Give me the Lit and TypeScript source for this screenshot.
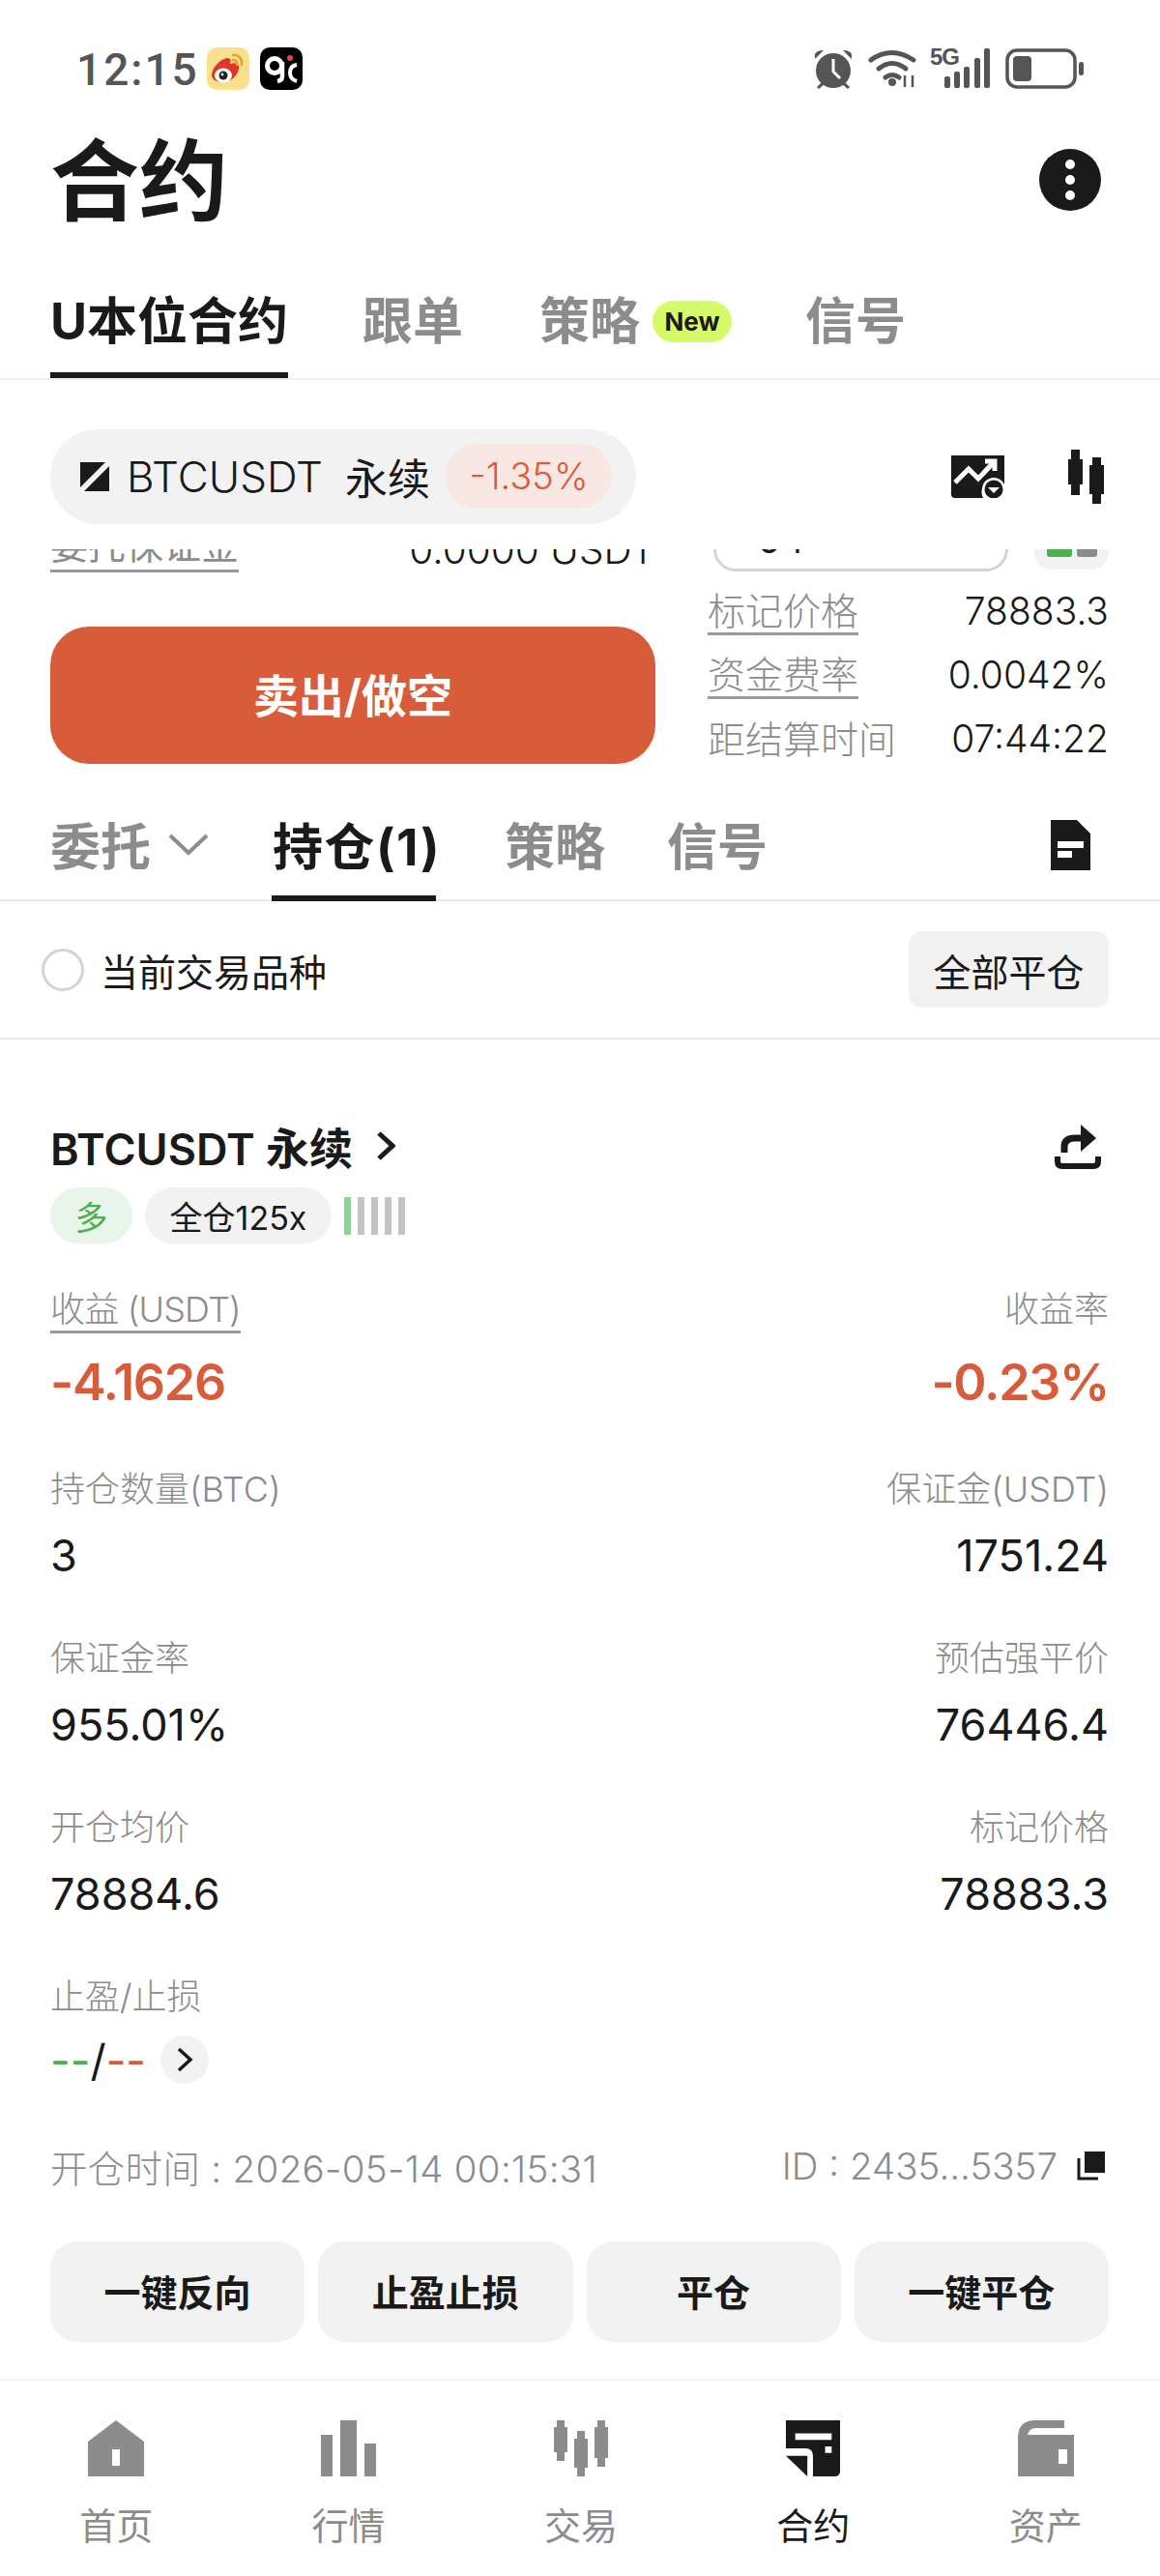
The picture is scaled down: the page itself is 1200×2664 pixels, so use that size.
import { LitElement, html, css, svg } from "lit";
import { customElement } from "lit/decorators.js";

const navIcons = [
  svg`<svg class="nav-ic" viewBox="0 0 58 58"><path fill="#8c8c8c" fill-rule="evenodd" d="M0 22 29 0l29 22v36H0zM25 30v17h8V30z"/></svg>`,
  svg`<svg class="nav-ic" viewBox="0 0 58 58"><path fill="#8c8c8c" d="M0 15h12v43H0zM20 0h17v58H20zM45 24h12v34H45z"/></svg>`,
  svg`<svg class="nav-ic" viewBox="0 0 58 58"><g fill="#8c8c8c"><path d="M4 0h8v7h3v26h-3v9H4v-9H1V7h3z"/><path d="M25 11h8v8h3v30h-3v9h-8v-9h-3V19h3z"/><path d="M46 0h8v7h3v32h-3v9h-8v-9h-3V7h3z"/></g></svg>`,
  svg`<svg class="nav-ic" viewBox="0 0 58 60"><path fill="#1a1a1a" fill-rule="evenodd" d="M0 0h58v54q0 6-6 6H29V38q0-8-8-8H0zM10 14v7h39v-7zM42 28v7h7v-7z"/><path fill="#1a1a1a" d="M0 38h23v22z"/></svg>`,
  svg`<svg class="nav-ic" viewBox="0 0 58 58"><path fill="#8c8c8c" fill-rule="evenodd" d="M0 58V18Q0 0 18 0h30v8H18q-6 0-8 7h48v43zM42 30v15h9V30z"/></svg>`,
];
const navLabels = ["首页", "行情", "交易", "合约", "资产"];

type M = { l: string; v: string; r: string; rv: string };
const metrics: M[] = [
  { l: "持仓数量(BTC)", v: "3", r: "保证金(USDT)", rv: "1751.24" },
  { l: "保证金率", v: "955.01%", r: "预估强平价", rv: "76446.4" },
  { l: "开仓均价", v: "78884.6", r: "标记价格", rv: "78883.3" },
];

@customElement("app-root")
export class AppRoot extends LitElement {
  static styles = css`
    :host { display: block; width: 1200px; height: 2664px; background: #fff; color: #1a1a1a; overflow: hidden;
      font-family: Inter, "Noto Sans CJK SC", sans-serif; }
    .status { height: 142px; display: flex; align-items: center; padding: 0 78px 0 79px; box-sizing: border-box; color: #555; }
    .time { font-size: 46px; font-family: Roboto, sans-serif; font-weight: 500; letter-spacing: 2px; width: 135px; padding-top: 2px; }
    .logo { width: 44px; height: 44px; display: block; }
    .logo + .logo { margin-left: 11px; }
    .st-right { margin-left: auto; display: flex; align-items: center; }
    .st-right svg { display: block; }
    .wifi { margin-left: 15px; }
    .cell { position: relative; width: 62px; height: 42px; margin-left: 12px; }
    .five { position: absolute; left: 0; top: -3px; line-height: 24px; font-family: "Liberation Sans", sans-serif; font-size: 24px; letter-spacing: -1px; font-weight: 700; }
    .cell svg { position: absolute; left: 15px; top: 0; }
    .batt { margin-left: 16px; }

    .head { height: 92px; display: flex; align-items: center; justify-content: space-between; padding: 0 61px 0 52px; }
    h1 { margin: 0; font-size: 92px; font-weight: 700; line-height: 92px; }
    .menu { width: 64px; height: 64px; display: block; margin-top: -4px; }

    .tabs { height: 157px; border-bottom: 2px solid #f0f0f0; display: flex; padding-left: 52px; position: relative; box-sizing: content-box; }
    .tab { font-size: 52px; font-weight: 700; color: #8c8c8c; display: flex; align-items: flex-end; line-height: 72px; padding-bottom: 22px; height: 157px; box-sizing: border-box; position: relative; }
    .tab.on { color: #1a1a1a; }
    .tab.on::after { content: ""; position: absolute; left: 0; right: 0; bottom: 0; height: 6px; background: #1a1a1a; }
    .t1 { width: 246px; white-space: nowrap; }
    .t2 { margin-left: 77px; } .t3 { margin-left: 79px; } .t4 { margin-left: 76px; }
    .new { background: #d6fb6a; color: #1a1a1a; font-size: 26px; font-weight: 700; border-radius: 22px; width: 82px; height: 43px; line-height: 43px; text-align: center; margin: 0 0 15px 13px; }

    .bar { height: 175px; display: flex; align-items: center; justify-content: space-between; padding: 24px 53px 0 52px; box-sizing: border-box; }
    .pill { width: 606px; height: 98px; border-radius: 49px; background: #f2f2f2; display: flex; align-items: center; padding-left: 31px; box-sizing: border-box; font-size: 44px; }
    .pill svg { width: 30px; height: 30px; margin-right: 18px; }
    .sym { width: 226px; white-space: nowrap; letter-spacing: 0; font-weight: 300; }
    .perp { width: 104px; font-weight: 400; }
    .chg { width: 172px; height: 67px; line-height: 67px; border-radius: 34px; background: #f8e7e2; color: #d95c3a; text-align: center; font-size: 38px; font-weight: 300; }
    .bar-ic { display: flex; align-items: center; gap: 66px; margin-right: 5px; }
    .bar-ic svg { display: block; }

    .panel { height: 257px; overflow: hidden; }
    .clip { height: 27px; overflow: hidden; position: relative; padding: 0 53px 0 52px; display: flex; }
    .clip-l { width: 626px; height: 24px; display: flex; justify-content: space-between; align-items: flex-end; flex: none; }
    .clip-l .u { font-size: 39px; line-height: 50px; color: #8c8c8c; border-bottom: 3px solid #9a9a9a; flex: none; }
    .clip-l .v { font-size: 40.5px; line-height: 50px; font-weight: 300; margin-right: 0; margin-bottom: -2px; flex: none; }
    .input { margin-left: 60px; width: 305px; height: 23px; border: 3px solid #d4d4d4; border-top: none; border-radius: 0 0 26px 26px; box-sizing: border-box; position: relative; overflow: hidden; flex: none; }
    .input span { position: absolute; left: 42px; bottom: 10px; font-size: 40px; line-height: 40px; color: #1a1a1a; }
    .lev { margin-left: 27px; width: 77px; height: 21px; background: #f2f2f2; border-radius: 0 0 18px 18px; display: flex; gap: 5px; padding-left: 13px; box-sizing: border-box; flex: none; }
    .lev i { display: block; height: 8px; border-radius: 0 0 3px 3px; }
    .lev .g { width: 26px; background: #4caf50; }
    .lev .k { width: 21px; background: #8c8c8c; }

    .trade { display: flex; padding: 0 53px 0 52px; align-items: flex-start; }
    .sell { width: 626px; height: 142px; margin-top: 53px; border-radius: 40px; background: #d95c3a; color: #fff; font-size: 47px; font-weight: 700; display: flex; align-items: center; justify-content: center; flex: none; padding-bottom: 5px; box-sizing: border-box; }
    .info { margin: 5px 0 0 54px; flex: 1; }
    .irow { height: 66px; display: flex; align-items: center; justify-content: space-between; }
    .irow .k { color: #8c8c8c; line-height: 50px; font-size: 39px; font-weight: 300; }
    .irow .k.u { border-bottom: 3px solid #9a9a9a; line-height: 44px; }
    .irow .val { font-weight: 300; font-size: 39px; margin-top: -3px; line-height: 50px; }

    .tabs2 { height: 107px; border-bottom: 2px solid #e8e8e8; box-sizing: border-box; display: flex; padding: 0 53px 0 52px; font-size: 52px; font-weight: 700; color: #8c8c8c; position: relative; }
    .tb { height: 105px; display: flex; align-items: center; padding-bottom: 10px; box-sizing: border-box; position: relative; white-space: nowrap; }
    .tb svg { margin-left: 18px; display: block; }
    .tb.hold { color: #1a1a1a; margin-left: 65px; width: 170px; justify-content: center; letter-spacing: 1.5px; text-indent: 6px; }
    .tb.hold::after { content: ""; position: absolute; left: 0; right: 0; bottom: -2px; height: 6px; background: #1a1a1a; }
    .tb.s1 { margin-left: 71px; } .tb.s2 { margin-left: 64px; }
    .doc { margin-left: auto; align-self: center; display: block; margin-right: 19px; margin-top: -8px; }

    .filter { height: 143px; border-bottom: 2px solid #e8e8e8; box-sizing: border-box; display: flex; align-items: center; padding: 0 53px 0 43px; font-size: 39px; }
    .radio { width: 44px; height: 44px; border-radius: 50%; border: 3px solid #d4d4d4; box-sizing: border-box; margin-right: 17px; }
    .closeall { margin-left: auto; width: 207px; height: 79px; border-radius: 14px; background: #f2f2f2; display: flex; align-items: center; justify-content: center; }

    .card { padding: 0 53px 0 52px; }
    .ttl { height: 74px; margin-top: 73px; margin-bottom: 1px; display: flex; align-items: center; font-size: 45px; font-weight: 600; }
    .ttl .chev { margin-left: 24px; display: block; }
    .ttl .share { margin-left: auto; margin-right: 8px; margin-top: 2px; display: block; }
    .tags { margin-top: 6px; height: 58px; display: flex; align-items: center; font-size: 34px; }
    .tag { height: 58px; border-radius: 29px; background: #f2f2f2; display: flex; align-items: center; justify-content: center; }
    .tag.long { width: 85px; background: #e8f5ea; color: #4caf50; margin-right: 13px; }
    .tag.lev2 { width: 193px; margin-right: 13px; }
    .rbars { display: flex; gap: 7px; }
    .rbars i { display: block; width: 7px; height: 39px; background: #c4c4c4; }
    .rbars i.on { background: #8fd19a; }

    .mrow { display: flex; justify-content: space-between; }
    .m1 { margin-top: 42px; }
    .mrow + .mrow { margin-top: 45px; }
    .m1 + .mrow { margin-top: 48px; }
    .col-r { text-align: right; }
    .lab { font-size: 36px; line-height: 52px; height: 50px; color: #8c8c8c; font-weight: 300; }
    .lab .u { border-bottom: 3px solid #9a9a9a; display: inline-block; line-height: 44px; height: 44px; letter-spacing: -0.8px; }
    .val { font-size: 45px; line-height: 70px; margin-top: 10px; font-weight: 400; }
    .big { font-size: 52px; line-height: 72px; margin-top: 16px; font-weight: 600; color: #d95c3a; letter-spacing: -1.3px; }
    .tp { display: flex; align-items: center; margin-top: 6px; height: 70px; font-size: 45px; }
    .tp .g { color: #4caf50; } .tp .r { color: #d95c3a; }
    .more { width: 50px; height: 50px; border-radius: 50%; background: #f2f2f2; margin-left: 15px; display: flex; align-items: center; justify-content: center; }

    .foot { margin-top: 51px; height: 50px; display: flex; justify-content: space-between; align-items: center; font-size: 38.5px; color: #8c8c8c; font-weight: 300; padding-bottom: 2px; box-sizing: border-box; }
    .foot .date { letter-spacing: 0.3px; }
    .foot .id { display: flex; align-items: center; gap: 20px; margin-right: 4px; }
    .foot .id svg { display: block; }
    .acts { margin-top: 52px; display: grid; grid-template-columns: repeat(4, 1fr); gap: 14px; }
    .act { height: 104px; border-radius: 28px; background: #f2f2f2; font-size: 38px; font-weight: 700; display: flex; align-items: center; justify-content: center; padding-bottom: 3px; box-sizing: border-box; }

    nav { margin-top: 38px; border-top: 2px solid #f0f0f0; height: 200px; display: grid; grid-template-columns: repeat(5, 240.4px); box-sizing: border-box; padding-top: 41px; color: #8c8c8c; font-size: 38px; }
    .ni { display: flex; flex-direction: column; align-items: center; }
    .ni.on { color: #1a1a1a; }
    .nav-ic { width: 58px; height: 58px; display: block; }
    .ni span { margin-top: 26px; line-height: 50px; }
  `;

  render() {
    return html`
      <div class="status">
        <span class="time">12:15</span>
        <svg class="logo" viewBox="0 0 44 44">
          <rect width="44" height="44" rx="10" fill="#fbe08e"/>
          <path d="M5 29c0-8 9-17 16-18 4 0 4 3 3 6 6-2 10 0 9 5-1 8-9 14-17 14-6 0-11-3-11-7z" fill="#e0352b"/>
          <ellipse cx="17" cy="29" rx="9" ry="7.5" fill="#fff"/><circle cx="17" cy="29" r="4.5" fill="#222"/><circle cx="16" cy="28" r="1.4" fill="#fff"/>
          <path d="M27 8c6-1 10 4 9 10M27 13c3 0 5 2 4 5" fill="none" stroke="#ef9a2b" stroke-width="2.4" stroke-linecap="round"/>
        </svg>
        <svg class="logo" viewBox="0 0 44 44">
          <rect width="44" height="44" rx="10" fill="#000"/>
          <circle cx="15" cy="19" r="7.5" fill="none" stroke="#fff" stroke-width="5"/>
          <path d="M23 15v15q0 4-5 5" fill="none" stroke="#fff" stroke-width="4.5"/>
          <path d="M38 18q-7 1-7 8t7 9" fill="none" stroke="#fff" stroke-width="4"/>
          <circle cx="31" cy="11" r="3" fill="#e0492b"/>
        </svg>
        <div class="st-right">
          <svg width="42" height="42" viewBox="0 0 42 42" fill="#555">
            <circle cx="21" cy="23" r="18"/><path d="M2 11 11 2Q4 2 2 6zM40 11 31 2q7 0 9 4z"/>
            <path d="M9 35 4 40l2 2 6-5zM33 35l5 5-2 2-6-5z"/>
            <path d="M21 11v13l7 7" fill="none" stroke="#fff" stroke-width="3"/>
          </svg>
          <svg class="wifi" width="52" height="42" viewBox="0 0 52 42" fill="none" stroke="#555" stroke-width="5" stroke-linecap="round">
            <path d="M3 12Q24-3 47 12"/><path d="M11 21Q25 10 39 21"/><path d="M18 30q7-5 14 0"/><circle cx="25" cy="35" r="4" fill="#555" stroke="none"/>
            <path d="M38 28v12M46 28v12" stroke-width="2.5" stroke-linecap="butt"/>
          </svg>
          <div class="cell">
            <span class="five">5G</span>
            <svg width="48" height="41" viewBox="0 0 48 41" fill="#555">
              <rect x="0" y="29" width="6" height="12" rx="2"/><rect x="10" y="24" width="6" height="17" rx="2"/><rect x="20" y="19" width="6" height="22" rx="2"/><rect x="31" y="10" width="6" height="31" rx="2"/><rect x="41" y="0" width="6" height="41" rx="2"/>
            </svg>
          </div>
          <svg class="batt" width="82" height="42" viewBox="0 0 82 42">
            <rect x="2" y="2" width="70" height="38" rx="10" fill="none" stroke="#555" stroke-width="3.5"/>
            <rect x="8" y="8" width="19" height="26" rx="4" fill="#555"/>
            <rect x="76" y="14" width="5" height="14" rx="2.5" fill="#555"/>
          </svg>
        </div>
      </div>

      <div class="head">
        <h1>合约</h1>
        <svg class="menu" viewBox="0 0 64 64"><circle cx="32" cy="32" r="32" fill="#1a1a1a"/><circle cx="32" cy="16" r="5" fill="#fff"/><circle cx="32" cy="32" r="5" fill="#fff"/><circle cx="32" cy="48" r="5" fill="#fff"/></svg>
      </div>

      <div class="tabs">
        <div class="tab on t1">U本位合约</div>
        <div class="tab t2">跟单</div>
        <div class="tab t3">策略<span class="new">New</span></div>
        <div class="tab t4">信号</div>
      </div>

      <div class="bar">
        <div class="pill">
          <svg viewBox="0 0 30 30"><path fill="#1a1a1a" d="M0 0h26L0 26zM30 4v26H4z"/></svg>
          <span class="sym">BTCUSDT</span><span class="perp">永续</span><span class="chg">-1.35%</span>
        </div>
        <div class="bar-ic">
          <svg width="55" height="44" viewBox="0 0 55 44">
            <path fill="#1a1a1a" d="M0 0h55v32a12 12 0 0 0-22 12H4q-4 0-4-4z"/>
            <path d="M4 28 18 14l10 10 16-17M35 6h10v10" fill="none" stroke="#fff" stroke-width="5"/>
            <circle cx="44" cy="35" r="12" fill="#fff"/><circle cx="44" cy="35" r="9.5" fill="#1a1a1a"/><path d="M38 33h12l-6 6z" fill="#fff"/>
          </svg>
          <svg width="37" height="56" viewBox="0 0 37 56" fill="#1a1a1a">
            <path d="M3 0h9v10h3v26h-3v11H3V36H0V10h3z"/><path d="M25 8h9v8h3v30h-3v10h-9V46h-3V16h3z"/>
          </svg>
        </div>
      </div>

      <div class="panel">
        <div class="clip">
          <div class="clip-l"><span class="u">委托保证金</span><span class="v">0.0000 USDT</span></div>
          <div class="input"><span>0↑</span></div>
          <div class="lev"><i class="g"></i><i class="k"></i></div>
        </div>
        <div class="trade">
          <div class="sell">卖出/做空</div>
          <div class="info">
            <div class="irow"><span class="k u">标记价格</span><span class="val">78883.3</span></div>
            <div class="irow"><span class="k u">资金费率</span><span class="val">0.0042%</span></div>
            <div class="irow"><span class="k">距结算时间</span><span class="val">07:44:22</span></div>
          </div>
        </div>
      </div>

      <div class="tabs2">
        <div class="tb">委托<svg width="42" height="24" viewBox="0 0 42 24"><path d="M2 3l19 18L40 3" fill="none" stroke="#8c8c8c" stroke-width="4"/></svg></div>
        <div class="tb hold">持仓(1)</div>
        <div class="tb s1">策略</div>
        <div class="tb s2">信号</div>
        <svg class="doc" width="41" height="52" viewBox="0 0 41 52"><path fill="#1a1a1a" fill-rule="evenodd" d="M0 0h27l14 14v38H0zM7 22v7h27v-7zM7 32v7h15v-7z"/></svg>
      </div>

      <div class="filter">
        <div class="radio"></div>
        <span>当前交易品种</span>
        <div class="closeall">全部平仓</div>
      </div>

      <div class="card">
        <div class="ttl">BTCUSDT 永续
          <svg class="chev" width="20" height="30" viewBox="0 0 20 30"><path d="M3 2l14 13L3 28" fill="none" stroke="#1a1a1a" stroke-width="5"/></svg>
          <svg class="share" width="48" height="46" viewBox="0 0 48 46"><path fill="none" stroke="#1a1a1a" stroke-width="7" d="M10 29v-6q0-9 11-9h10"/><path fill="#1a1a1a" d="M27 0l16 14-16 14z"/><path fill="none" stroke="#1a1a1a" stroke-width="6" d="M3 33v5q0 5 5 5h32q5 0 5-5v-5"/></svg>
        </div>
        <div class="tags">
          <div class="tag long">多</div>
          <div class="tag lev2">全仓125x</div>
          <div class="rbars"><i class="on"></i><i></i><i></i><i></i><i></i></div>
        </div>

        <div class="mrow m1">
          <div><div class="lab"><span class="u">收益 (USDT)</span></div><div class="big">-4.1626</div></div>
          <div class="col-r"><div class="lab">收益率</div><div class="big">-0.23%</div></div>
        </div>
        ${metrics.map((m) => html`
          <div class="mrow">
            <div><div class="lab">${m.l}</div><div class="val">${m.v}</div></div>
            <div class="col-r"><div class="lab">${m.r}</div><div class="val">${m.rv}</div></div>
          </div>`)}
        <div class="mrow">
          <div><div class="lab">止盈/止损</div>
            <div class="tp"><span class="g">--</span><span>/</span><span class="r">--</span>
              <span class="more"><svg width="20" height="28" viewBox="0 0 20 28"><path d="M4 3l12 11L4 25" fill="none" stroke="#1a1a1a" stroke-width="3.5"/></svg></span>
            </div>
          </div>
        </div>

        <div class="foot">
          <span class="date">开仓时间 : 2026-05-14 00:15:31</span>
          <span class="id">ID : 2435...5357
            <svg width="29" height="30" viewBox="0 0 29 30"><path fill="#1a1a1a" d="M8 0h21v22H8z"/><path fill="none" stroke="#1a1a1a" stroke-width="3" d="M2 7v21h20"/></svg>
          </span>
        </div>
        <div class="acts">
          <div class="act">一键反向</div><div class="act">止盈止损</div><div class="act">平仓</div><div class="act">一键平仓</div>
        </div>
      </div>

      <nav>
        ${navLabels.map((l, i) => html`<div class="ni ${i === 3 ? "on" : ""}">${navIcons[i]}<span>${l}</span></div>`)}
      </nav>
    `;
  }
}
